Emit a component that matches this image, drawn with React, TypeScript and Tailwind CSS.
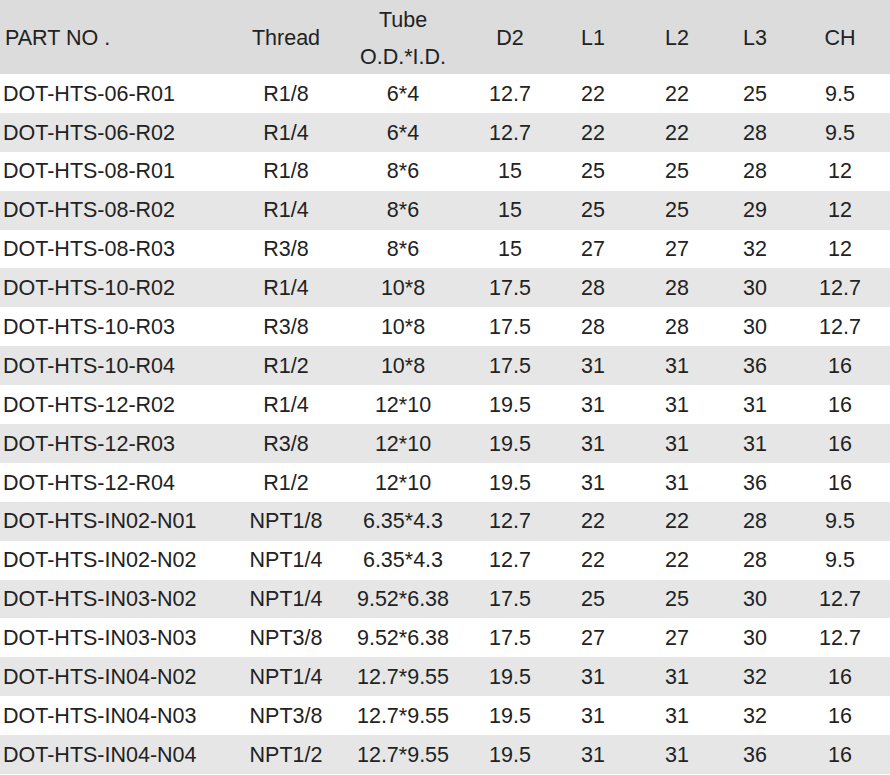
const COLS = 'grid grid-cols-[234px_104px_130px_84px_82px_86px_70px_100px]'

const ROWS: string[][] = [
  ['DOT-HTS-06-R01', 'R1/8', '6*4', '12.7', '22', '22', '25', '9.5'],
  ['DOT-HTS-06-R02', 'R1/4', '6*4', '12.7', '22', '22', '28', '9.5'],
  ['DOT-HTS-08-R01', 'R1/8', '8*6', '15', '25', '25', '28', '12'],
  ['DOT-HTS-08-R02', 'R1/4', '8*6', '15', '25', '25', '29', '12'],
  ['DOT-HTS-08-R03', 'R3/8', '8*6', '15', '27', '27', '32', '12'],
  ['DOT-HTS-10-R02', 'R1/4', '10*8', '17.5', '28', '28', '30', '12.7'],
  ['DOT-HTS-10-R03', 'R3/8', '10*8', '17.5', '28', '28', '30', '12.7'],
  ['DOT-HTS-10-R04', 'R1/2', '10*8', '17.5', '31', '31', '36', '16'],
  ['DOT-HTS-12-R02', 'R1/4', '12*10', '19.5', '31', '31', '31', '16'],
  ['DOT-HTS-12-R03', 'R3/8', '12*10', '19.5', '31', '31', '31', '16'],
  ['DOT-HTS-12-R04', 'R1/2', '12*10', '19.5', '31', '31', '36', '16'],
  ['DOT-HTS-IN02-N01', 'NPT1/8', '6.35*4.3', '12.7', '22', '22', '28', '9.5'],
  ['DOT-HTS-IN02-N02', 'NPT1/4', '6.35*4.3', '12.7', '22', '22', '28', '9.5'],
  ['DOT-HTS-IN03-N02', 'NPT1/4', '9.52*6.38', '17.5', '25', '25', '30', '12.7'],
  ['DOT-HTS-IN03-N03', 'NPT3/8', '9.52*6.38', '17.5', '27', '27', '30', '12.7'],
  ['DOT-HTS-IN04-N02', 'NPT1/4', '12.7*9.55', '19.5', '31', '31', '32', '16'],
  ['DOT-HTS-IN04-N03', 'NPT3/8', '12.7*9.55', '19.5', '31', '31', '32', '16'],
  ['DOT-HTS-IN04-N04', 'NPT1/2', '12.7*9.55', '19.5', '31', '31', '36', '16'],
]

export default function App() {
  return (
    <div className="w-[890px] h-[775px] bg-white text-[21.5px] leading-none text-[#222] font-['Liberation_Sans',Arial,sans-serif] overflow-hidden">
      {/* Header */}
      <div className={`${COLS} h-[74px] bg-[#dcdcdc] items-center`}>
        <div className="pl-[5px] pt-[3px]">PART NO .</div>
        <div className="text-center pt-[3px]">Thread</div>
        <div className="flex flex-col items-center gap-[16px] pt-[4px]">
          <span>Tube</span>
          <span>O.D.*I.D.</span>
        </div>
        <div className="text-center pt-[3px]">D2</div>
        <div className="text-center pt-[3px]">L1</div>
        <div className="text-center pt-[3px]">L2</div>
        <div className="text-center pt-[3px]">L3</div>
        <div className="text-center pt-[3px]">CH</div>
      </div>

      {/* Rows */}
      {ROWS.map((r, i) => (
        <div
          key={r[0]}
          className={`${COLS} h-[38.9px] items-center ${i % 2 === 1 ? 'bg-[#e6e6e6]' : 'bg-white'}`}
        >
          {r.map((c, j) => (
            <div key={j} className={j === 0 ? 'pl-[3px] pt-[2px]' : 'text-center pt-[2px]'}>
              {c}
            </div>
          ))}
        </div>
      ))}
    </div>
  )
}
